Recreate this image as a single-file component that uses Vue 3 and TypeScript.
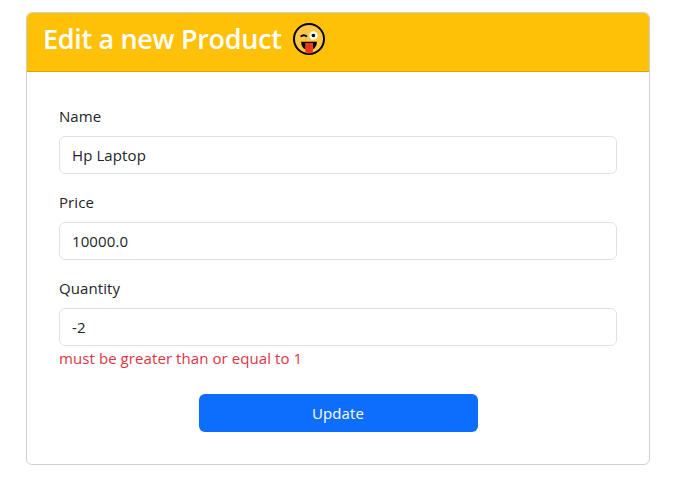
<script setup lang="ts">
import { reactive } from 'vue'

interface Product {
  name: string
  price: string
  quantity: string
}

const product = reactive<Product>({ name: 'Hp Laptop', price: '10000.0', quantity: '-2' })
const quantityError = 'must be greater than or equal to 1'
</script>

<template>
  <main class="page">
    <section class="card">
      <header class="card-header">
        <h3 class="title"><span>Edit a new Product</span>
          <svg class="emoji" viewBox="0 0 32 32" aria-hidden="true">
            <circle cx="16" cy="16" r="15" fill="#fcc744" stroke="#000" stroke-width="2" />
            <path d="M7.6 13.6Q10.8 11 14 13.6" fill="none" stroke="#000" stroke-width="1.8" />
            <circle cx="20.4" cy="12.5" r="4.2" fill="#fff" />
            <circle cx="20.4" cy="12.5" r="1.8" fill="#000" />
            <path d="M8 18.7H24Q23.6 27 16 27Q8.4 27 8 18.7Z" fill="#000" />
            <path d="M12.2 20H20V27Q20 30.6 16.1 30.6Q12.2 30.6 12.2 27Z" fill="#f03a17" />
            <path d="M16.1 21V27" stroke="#c92f12" stroke-width="0.9" />
          </svg>
        </h3>
      </header>
      <form class="card-body" @submit.prevent>
        <div class="field">
          <label for="name">Name</label>
          <input id="name" v-model="product.name" type="text" />
        </div>
        <div class="field">
          <label for="price">Price</label>
          <input id="price" v-model="product.price" type="text" />
        </div>
        <div class="field last">
          <label for="quantity">Quantity</label>
          <input id="quantity" v-model="product.quantity" type="text" />
          <span class="error">{{ quantityError }}</span>
        </div>
        <button type="submit">Update</button>
      </form>
    </section>
  </main>
</template>

<style>
body {
  margin: 0;
  background: #fff;
}
</style>

<style scoped>
* {
  box-sizing: border-box;
}
.page {
  padding: 12px 28px 0 26px;
  font-family: "Open Sans", "Noto Sans", sans-serif;
  font-size: 15px;
  line-height: 24px;
  letter-spacing: 0.08px;
  color: #212529;
}
.card {
  border: 1px solid #cfcfcf;
  border-radius: 6px;
  overflow: hidden;
}
.card-header {
  padding: 9px 16px 8px;
  background: #ffc107;
  border-bottom: 1px solid #d9a40b;
}
.title {
  display: flex;
  align-items: center;
  gap: 11px;
  height: 33.6px;
  margin: 0 0 7px;
  font-size: 27px;
  font-weight: 600;
  letter-spacing: -0.32px;
  color: #fff;
}
.emoji {
  width: 32px;
  height: 32px;
}
.card-body {
  display: flex;
  flex-direction: column;
  padding: 32px;
}
.field {
  display: flex;
  flex-direction: column;
  margin-bottom: 16px;
}
.field.last {
  margin-bottom: 24px;
}
label {
  margin-bottom: 8px;
}
input {
  width: 100%;
  height: 38px;
  padding: 6px 12px;
  border: 1px solid #dee2e6;
  border-radius: 6px;
  font: inherit;
  letter-spacing: 0.1px;
  color: inherit;
  background: #fff;
  outline: none;
}
.error {
  color: #dc3545;
}
button {
  align-self: center;
  width: 279px;
  height: 38px;
  padding: 0;
  border: 0;
  border-radius: 6px;
  font: inherit;
  letter-spacing: inherit;
  color: #fff;
  background: #0d6efd;
}
</style>
